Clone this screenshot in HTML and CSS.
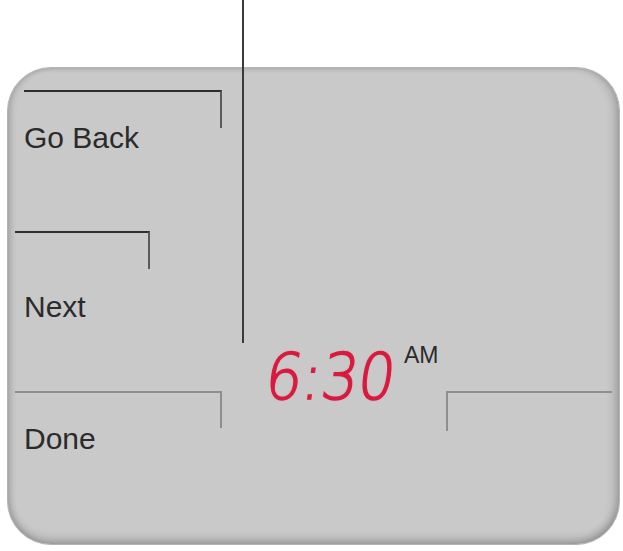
FILE: index.html
```html
<!DOCTYPE html>
<html>
<head>
<meta charset="utf-8">
<link rel="stylesheet" href="styles.css">
</head>
<body>
<div class="page">
  <div class="callout"></div>
  <div class="panel">
    <div class="bracket bracket-back"></div>
    <div class="label label-back">Go Back</div>
    <div class="bracket bracket-next"></div>
    <div class="label label-next">Next</div>
    <div class="bottom-row">
      <div class="done-col">
        <div class="bracket bracket-done"></div>
        <div class="label label-done">Done</div>
      </div>
      <div class="clock">
        <span class="digits">6:30</span>
        <span class="ampm">AM</span>
      </div>
      <div class="bracket-right"></div>
    </div>
  </div>
</div>
</body>
</html>
```
FILE: styles.css
```css
html, body {
  margin: 0;
  padding: 0;
  background: #ffffff;
}

.page {
  position: relative;
  width: 623px;
  height: 551px;
  padding-top: 67px;
  box-sizing: border-box;
  font-family: "Liberation Sans", Arial, sans-serif;
  overflow: hidden;
}

.callout {
  position: absolute;
  left: 242px;
  top: 0;
  width: 2px;
  height: 343px;
  background: #3a3a3a;
  z-index: 2;
}

.panel {
  margin-left: 7px;
  width: 613px;
  height: 478px;
  box-sizing: border-box;
  border-radius: 44px;
  background: #c9c9c9;
  border: 1px solid #b4b4b4;
  box-shadow:
    inset 0 -8px 10px -4px rgba(0, 0, 0, 0.22),
    inset 6px 0 6px -3px rgba(0, 0, 0, 0.15),
    inset -8px 0 10px -4px rgba(0, 0, 0, 0.2),
    inset 0 4px 5px -3px rgba(0, 0, 0, 0.1);
  display: flex;
  flex-direction: column;
  align-items: flex-start;
}

.bracket {
  box-sizing: border-box;
  border-top: 2px solid #2e2e2e;
  border-right: 2px solid #5a5a5a;
}

.bracket-back {
  margin-top: 22px;
  margin-left: 16px;
  width: 198px;
  height: 38px;
}

.bracket-next {
  margin-top: 78px;
  margin-left: 7px;
  width: 135px;
  height: 38px;
}

.bracket-done {
  margin-left: 7px;
  width: 207px;
  height: 37px;
  border-top: 2px solid #8e8e8e;
  border-right: 2px solid #8e8e8e;
}

.label {
  font-size: 30px;
  line-height: 30px;
  color: #2b2b2b;
  margin-left: 16px;
}

.label-back {
  margin-top: -5px;
}

.label-next {
  margin-top: 23px;
}

.label-done {
  margin-top: -4px;
}

.bottom-row {
  margin-top: 69px;
  display: flex;
  align-items: flex-start;
  width: 100%;
}

.done-col {
  display: flex;
  flex-direction: column;
  align-items: flex-start;
}

.clock {
  margin-top: -47px;
  margin-left: 44px;
  display: flex;
  align-items: flex-start;
}

.digits {
  display: inline-block;
  font-family: "DejaVu Sans", sans-serif;
  font-weight: 200;
  font-size: 64px;
  line-height: 66px;
  color: #d81b3f;
  -webkit-text-stroke: 1.6px #d81b3f;
  transform-origin: left center;
  transform: skewX(-8deg) scaleX(0.9);
  width: 127px;
  white-space: nowrap;
  text-shadow: 0 0 2px rgba(235, 90, 110, 0.6);
}

.ampm {
  margin-left: 11px;
  font-size: 23px;
  line-height: 23px;
  color: #2b2b2b;
}

.bracket-right {
  margin-left: auto;
  margin-right: 7px;
  width: 166px;
  height: 40px;
  box-sizing: border-box;
  border-top: 2px solid #8e8e8e;
  border-left: 2px solid #8e8e8e;
}
```
